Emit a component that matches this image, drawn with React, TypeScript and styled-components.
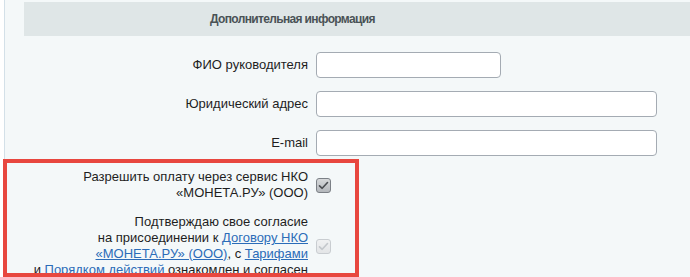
import React from "react";
import styled, { createGlobalStyle } from "styled-components";

const Global = createGlobalStyle`
  html, body { margin: 0; padding: 0; background: #ffffff; }
  body { font-family: "Liberation Sans", Arial, sans-serif; font-size: 13px; color: #1e1e1e; }
`;

const Page = styled.div`
  position: relative;
  width: 690px;
  height: 277px;
  overflow: hidden;
`;

const Panel = styled.div`
  margin-left: 4px;
  height: 100%;
  border-left: 1px solid #d3e0e8;
  background: #f4f8f9;
  padding-top: 2px;
  box-sizing: border-box;
`;

const Header = styled.div`
  margin-left: 19px;
  height: 34px;
  background: #dfe6e7;
  display: flex;
  align-items: center;
  padding-left: 186px;
  font-weight: bold;
  font-size: 12px;
  letter-spacing: -0.65px;
  color: #4a5256;
`;

const Form = styled.div`
  display: grid;
  grid-template-columns: 303px 1fr;
  column-gap: 8px;
  row-gap: 13px;
  padding-top: 16px;
  align-items: center;
`;

const Label = styled.div`
  text-align: right;
  line-height: 16px;
  white-space: nowrap;
  color: #1e1e1e;
`;

const Input = styled.input<{ $w: number }>`
  box-sizing: border-box;
  width: ${(p) => p.$w}px;
  height: 26px;
  border: 1px solid #a4abb3;
  border-radius: 4px;
  background: #ffffff;
  padding: 0 6px;
  font: inherit;
  outline: none;
  margin: 0;
`;

const Link = styled.a`
  color: #2b6cb8;
  text-decoration: underline;
  cursor: pointer;
`;

const Box = styled.span<{ $disabled?: boolean }>`
  display: inline-flex;
  align-items: center;
  justify-content: center;
  width: 15px;
  height: 15px;
  box-sizing: border-box;
  border-radius: 3px;
  border: 1px solid ${(p) => (p.$disabled ? "#c9cdd1" : "#7b8086")};
  background: ${(p) =>
    p.$disabled
      ? "linear-gradient(#f0f1f2, #e3e5e7)"
      : "linear-gradient(#d6d8da, #b4b8bc)"};
  color: ${(p) => (p.$disabled ? "#c3c7cb" : "#4b4e52")};
`;

const CheckCell = styled.div`
  display: flex;
  align-items: center;
`;

const Checkbox = ({ disabled }: { disabled?: boolean }) => (
  <Box $disabled={disabled}>
    <svg width="11" height="11" viewBox="0 0 11 11">
      <path d="M1.5 5.8 L4.2 8.3 L9.5 2.5" fill="none" stroke="currentColor" strokeWidth="1.6" strokeLinecap="round" strokeLinejoin="round" />
    </svg>
  </Box>
);

const Highlight = styled.div`
  position: absolute;
  left: 3px;
  top: 159px;
  width: 356px;
  height: 118px;
  box-sizing: border-box;
  border: 4px solid #e8473f;
  pointer-events: none;
`;

export default function App() {
  return (
    <Page>
      <Global />
      <Panel>
        <Header>Дополнительная информация</Header>
        <Form>
          <Label>ФИО руководителя</Label>
          <div><Input $w={185} /></div>
          <Label>Юридический адрес</Label>
          <div><Input $w={341} /></div>
          <Label>E-mail</Label>
          <div><Input $w={341} /></div>
          <Label>
            Разрешить оплату через сервис НКО
            <br />
            «МОНЕТА.РУ» (ООО)
          </Label>
          <CheckCell><Checkbox /></CheckCell>
          <Label>
            Подтверждаю свое согласие
            <br />
            на присоединении к <Link>Договору НКО<br />«МОНЕТА.РУ» (ООО)</Link>, с <Link>Тарифами</Link>
            <br />
            и <Link>Порядком действий</Link> ознакомлен и согласен
          </Label>
          <CheckCell><Checkbox disabled /></CheckCell>
        </Form>
      </Panel>
      <Highlight />
    </Page>
  );
}
